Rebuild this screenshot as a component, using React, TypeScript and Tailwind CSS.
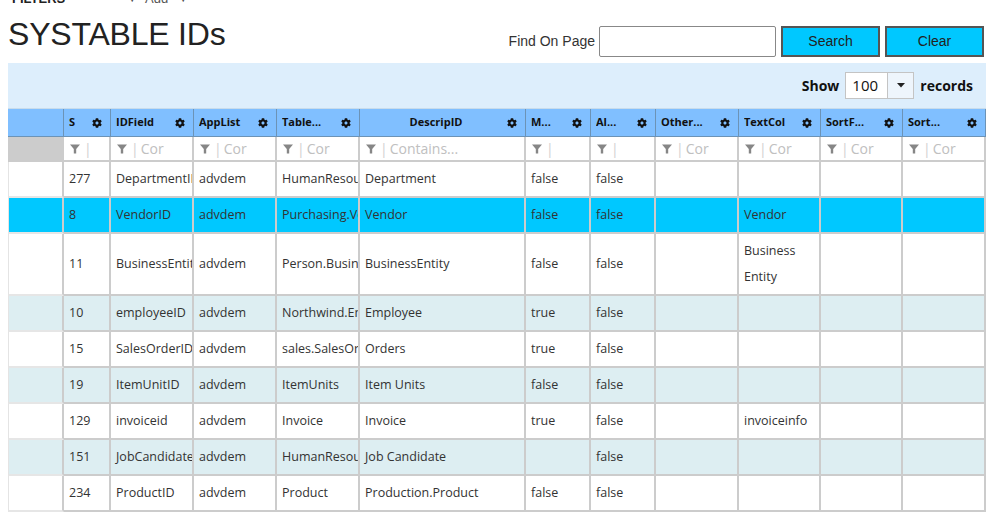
import { FaCog } from "react-icons/fa";

type Row = string[];

const cols = "grid grid-cols-[56px_47px_83px_83px_83px_166px_65px_65px_83px_82px_82px_83px]";

const headers = ["S", "IDField", "AppList", "Table...", "DescripID", "M...", "Al...", "Other...", "TextCol", "SortF...", "Sort..."];
const filters = ["", "Cor", "Cor", "Cor", "Contains...", "", "", "Cor", "Cor", "Cor", "Cor"];

const rows: Row[] = [
    ["277", "DepartmentID", "advdem", "HumanResources.Department", "Department", "false", "false", "", "", "", ""],
    ["8", "VendorID", "advdem", "Purchasing.Vendor", "Vendor", "false", "false", "", "Vendor", "", ""],
    ["11", "BusinessEntityID", "advdem", "Person.BusinessEntity", "BusinessEntity", "false", "false", "", "Business Entity", "", ""],
    ["10", "employeeID", "advdem", "Northwind.Employees", "Employee", "true", "false", "", "", "", ""],
    ["15", "SalesOrderID", "advdem", "sales.SalesOrderHeader", "Orders", "true", "false", "", "", "", ""],
    ["19", "ItemUnitID", "advdem", "ItemUnits", "Item Units", "false", "false", "", "", "", ""],
    ["129", "invoiceid", "advdem", "Invoice", "Invoice", "true", "false", "", "invoiceinfo", "", ""],
    ["151", "JobCandidateID", "advdem", "HumanResources.JobCandidate", "Job Candidate", "", "false", "", "", "", ""],
    ["234", "ProductID", "advdem", "Product", "Production.Product", "false", "false", "", "", "", ""],
];

function Funnel() {
    return (
        <svg width="10" height="10" viewBox="0 0 10 10" className="shrink-0">
            <polygon points="0,0.5 10,0.5 6.2,5 6.2,9.5 3.8,9.5 3.8,5" fill="#868686" />
        </svg>
    );
}

export default function App() {
    return (
        <div className="w-[986px] bg-white text-[#333] font-['Liberation_Sans',Arial,sans-serif] overflow-hidden">
            {/* clipped filter strip */}
            <div className="h-[6px] overflow-hidden flex items-end text-[13px] leading-[14px]">
                <span className="ml-[12px] font-bold text-[#222]">FILTERS</span>
                <span className="ml-[62px] text-[10px] text-[#555]">▼</span>
                <span className="ml-[8px] text-[#555]">Add</span>
                <span className="ml-[10px] text-[10px] text-[#555]">▼</span>
            </div>

            <div className="flex justify-between items-start pl-[8px] pr-[2px]">
                <h1 className="mt-[10px] text-[32px] leading-[36px] tracking-[-0.2px] text-[#222]">SYSTABLE IDs</h1>
                <div className="mt-[20px] flex items-center h-[31px] text-[14px]">
                    <span className="mr-[4px] text-[#333]">Find On Page</span>
                    <input className="w-[177px] h-[31px] border border-[#888] rounded-[2px] bg-white px-1 outline-none" />
                    <button className="ml-[5px] w-[99px] h-[31px] bg-[#00c8ff] border-2 border-[#555] text-[#222]">Search</button>
                    <button className="ml-[5px] w-[99px] h-[31px] bg-[#00c8ff] border-2 border-[#555] text-[#222]">Clear</button>
                </div>
            </div>

            <div className="ml-[8px] mt-[6px] font-['Open_Sans',sans-serif]">
                <div className="h-[45px] bg-[#ddeefc] flex items-center justify-end pr-[13px] text-[14px] font-bold text-[#111]">
                    <span>Show</span>
                    <div className="ml-[6px] flex h-[27px] border border-[#c4c4c4] bg-[#eef5fc]">
                        <span className="w-[41px] flex items-center pl-[6px] bg-white font-normal text-[15px]">100</span>
                        <span className="w-[26px] flex items-center justify-center border-l border-[#c4c4c4]">
                            <svg width="8" height="5" viewBox="0 0 8 5"><polygon points="0,0 8,0 4,4.5" fill="#222" /></svg>
                        </span>
                    </div>
                    <span className="ml-[6px]">records</span>
                </div>

                {/* header */}
                <div className={`${cols} h-[28px] bg-[#80bfff] border-t border-[#c8dcec] text-[11px] font-bold text-[#111]`}>
                    <div className="border-r border-[#6c93b6]" />
                    {headers.map((h, i) => (
                        <div key={i} className="flex items-center pl-[5px] pr-[8px] border-r border-[#6c93b6] overflow-hidden">
                            <span className={`flex-1 overflow-hidden whitespace-nowrap ${i === 4 ? "text-center" : ""}`}>{h}</span>
                            <FaCog className="shrink-0 text-[10px] text-[#111]" />
                        </div>
                    ))}
                </div>

                {/* filter row */}
                <div className={`${cols} h-[26px] border-t border-[#6c93b6] text-[14px]`}>
                    <div className="bg-[#cccccc] border-r-2 border-b-2 border-[#cccccc]" />
                    {filters.map((f, i) => (
                        <div key={i} className="flex items-center pl-[6px] border-r-2 border-b-2 border-[#cccccc] overflow-hidden whitespace-nowrap bg-white">
                            <Funnel />
                            <span className="ml-[4px] text-[#cfcfcf]">|</span>
                            <span className="ml-[2px] text-[#c0c0c0]">{f}</span>
                        </div>
                    ))}
                </div>

                {/* data rows */}
                {rows.map((r, ri) => {
                    const bg = ri === 1 ? "bg-[#00c8ff]" : ri % 2 === 1 ? "bg-[#ddeef2]" : "bg-white";
                    return (
                        <div key={ri} className={`${cols} ${bg} text-[12.5px] leading-[26px] text-[#333]`}>
                            <div className="border-l border-r-2 border-b-2 border-l-[#e4e4e4] border-r-[#cccccc] border-b-[#e6e6e6]" />
                            {r.map((c, ci) => (
                                <div key={ci} className="py-[4px] pl-[5px] border-r-2 border-b-2 border-[#cccccc] overflow-hidden break-normal flex items-center">
                                    <span className="whitespace-normal">{c}</span>
                                </div>
                            ))}
                        </div>
                    );
                })}
            </div>
        </div>
    );
}
